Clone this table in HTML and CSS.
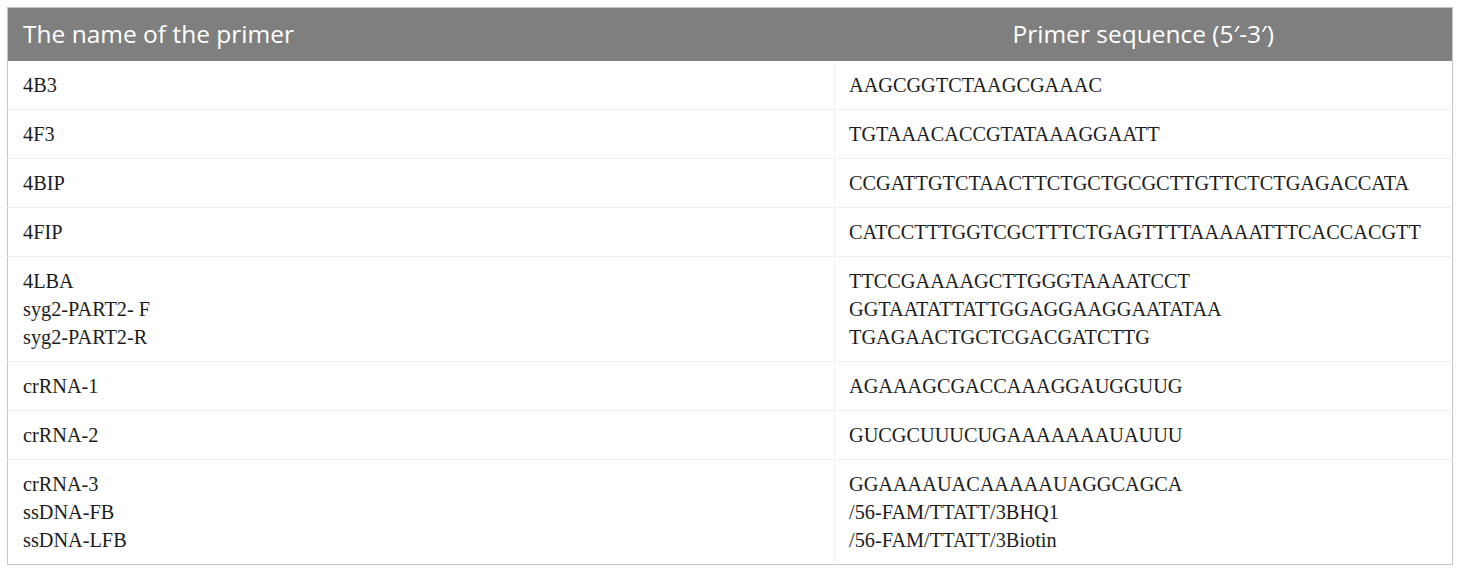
FILE: index.html
```html
<!DOCTYPE html>
<html lang="en">
<head>
<meta charset="utf-8">
<title>Primers</title>
<link rel="stylesheet" href="styles.css">
</head>
<body>
<div class="wrap">
<table class="primers">
  <thead>
    <tr>
      <th class="col-name">The name of the primer</th>
      <th class="col-seq">Primer sequence (5′-3′)</th>
    </tr>
  </thead>
  <tbody>
    <tr><td>4B3</td><td>AAGCGGTCTAAGCGAAAC</td></tr>
    <tr><td>4F3</td><td>TGTAAACACCGTATAAAGGAATT</td></tr>
    <tr><td>4BIP</td><td>CCGATTGTCTAACTTCTGCTGCGCTTGTTCTCTGAGACCATA</td></tr>
    <tr><td>4FIP</td><td>CATCCTTTGGTCGCTTTCTGAGTTTTAAAAATTTCACCACGTT</td></tr>
    <tr><td>4LBA<br>syg2-PART2- F<br>syg2-PART2-R</td><td>TTCCGAAAAGCTTGGGTAAAATCCT<br>GGTAATATTATTGGAGGAAGGAATATAA<br>TGAGAACTGCTCGACGATCTTG</td></tr>
    <tr><td>crRNA-1</td><td>AGAAAGCGACCAAAGGAUGGUUG</td></tr>
    <tr><td>crRNA-2</td><td>GUCGCUUUCUGAAAAAAAUAUUU</td></tr>
    <tr class="last"><td>crRNA-3<br>ssDNA-FB<br>ssDNA-LFB</td><td>GGAAAAUACAAAAAUAGGCAGCA<br>/56-FAM/TTATT/3BHQ1<br>/56-FAM/TTATT/3Biotin</td></tr>
  </tbody>
</table>
</div>
</body>
</html>
```
FILE: styles.css
```css
html, body {
  margin: 0;
  padding: 0;
  background: #ffffff;
}
.wrap {
  padding: 7px;
}
.primers {
  width: 1446px;
  border-collapse: collapse;
  border: 1px solid #c4c4c4;
  table-layout: fixed;
}
.primers thead th {
  background: #7f7f7f;
  color: #ffffff;
  font-family: "Open Sans", "Noto Sans", sans-serif;
  font-weight: 400;
  font-size: 24.5px;
  height: 53px;
  padding: 0 14px 0 15px;
  text-align: left;
  box-sizing: border-box;
  vertical-align: middle;
  line-height: 28px;
}
.primers .col-name {
  width: 827px;
}
.primers .col-seq {
  padding-left: 178px;
}
.primers tbody td {
  font-family: "Liberation Serif", "Times New Roman", serif;
  font-size: 20.3px;
  line-height: 28px;
  color: #1c1c1c;
  padding: 10px 14px 10px 15px;
  vertical-align: top;
  border-bottom: 1px solid #f1f1f1;
}
.primers tbody td + td {
  border-left: 1px solid #f1f1f1;
  padding-left: 14px;
}
.primers tbody tr.last td {
  border-bottom: 0;
}
```
